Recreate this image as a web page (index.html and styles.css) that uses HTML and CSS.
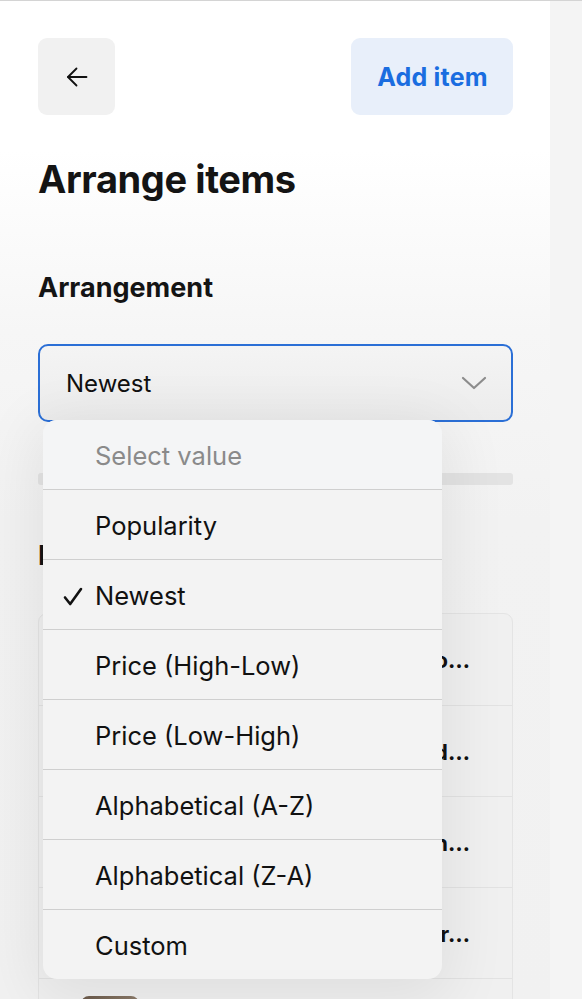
FILE: index.html
```html
<!DOCTYPE html>
<html lang="en">
<head>
<meta charset="utf-8">
<title>Arrange items</title>
<link rel="stylesheet" href="styles.css">
</head>
<body>
<div class="screen">
  <main class="panel">
    <header class="topbar">
      <button class="back-btn" aria-label="Back">
        <svg width="24" height="24" viewBox="0 0 24 24" fill="none" stroke="#111" stroke-width="1.8" stroke-linecap="round" stroke-linejoin="round"><path d="M21.5 12H3"/><path d="M11.5 3.5L3 12l8.5 8.5"/></svg>
      </button>
      <button class="add-btn">Add item</button>
    </header>

    <h1 class="title">Arrange items</h1>

    <h2 class="label">Arrangement</h2>

    <div class="select-wrap">
      <div class="select">
        <span class="select-value">Newest</span>
        <svg class="chevron" width="26" height="14" viewBox="0 0 26 14" fill="none" stroke="#8c8c8c" stroke-width="2.2" stroke-linecap="round" stroke-linejoin="round"><path d="M2 2l11 10L24 2"/></svg>
      </div>

      <ul class="menu">
        <li class="menu-row placeholder">Select value</li>
        <li class="menu-row">Popularity</li>
        <li class="menu-row checked"><svg class="check" width="20" height="19" viewBox="0 0 20 19" fill="none" stroke="#111" stroke-width="2.6" stroke-linecap="round" stroke-linejoin="round"><path d="M2 10.5l5.2 6.5L18 2"/></svg>Newest</li>
        <li class="menu-row">Price (High-Low)</li>
        <li class="menu-row">Price (Low-High)</li>
        <li class="menu-row">Alphabetical (A-Z)</li>
        <li class="menu-row">Alphabetical (Z-A)</li>
        <li class="menu-row">Custom</li>
      </ul>
    </div>

    <div class="bar"></div>

    <h2 class="label items-label">Items</h2>

    <div class="card">
      <div class="item"><div class="thumb"></div><span class="item-name">Stoneware bowl duo…</span></div>
      <div class="item"><div class="thumb"></div><span class="item-name">Cotton tote, braided…</span></div>
      <div class="item"><div class="thumb"></div><span class="item-name">Scented soy candle in…</span></div>
      <div class="item"><div class="thumb"></div><span class="item-name">Linen table runner for…</span></div>
      <div class="item"><div class="thumb"></div><span class="item-name">Woven rattan basket</span></div>
    </div>
  </main>
  <aside class="side"></aside>
</div>
</body>
</html>
```

FILE: styles.css
```css
* { box-sizing: border-box; }

html, body {
  margin: 0;
  padding: 0;
  height: 999px;
  overflow: hidden;
  font-family: Inter, "Noto Sans", "Liberation Sans", sans-serif;
  color: #111;
}

.screen {
  display: flex;
  height: 999px;
  overflow: hidden;
  border-top: 1px solid #d4d4d4;
}

.panel {
  width: 550px;
  flex: none;
  height: 100%;
  overflow: hidden;
  padding: 37px 37px 0 38px;
  background: linear-gradient(180deg, #ffffff 0px, #ffffff 150px, #f6f6f6 330px, #f2f2f2 520px, #f1f1f1 100%);
}

.side {
  flex: 1;
  background: #f4f4f4;
}

.topbar {
  display: flex;
  justify-content: space-between;
  align-items: center;
  height: 77px;
}

.back-btn {
  width: 77px;
  height: 77px;
  border: none;
  border-radius: 9px;
  background: #f1f1f1;
  display: flex;
  align-items: center;
  justify-content: center;
  padding: 0;
}

.add-btn {
  width: 162px;
  height: 77px;
  border: none;
  border-radius: 9px;
  background: #e8effa;
  color: #1a6de0;
  font-family: Inter, "Noto Sans", sans-serif;
  font-weight: 700;
  font-size: 25px;
  letter-spacing: 0.2px;
  padding: 0 0 0 1px;
}

.title {
  margin: 41px 0 0;
  font-size: 38px;
  line-height: 46px;
  font-weight: 700;
  letter-spacing: -0.4px;
  color: #141414;
}

.label {
  margin: 70px 0 0;
  font-size: 27px;
  line-height: 32px;
  font-weight: 700;
  letter-spacing: 0;
  color: #141414;
}

.select-wrap {
  position: relative;
  margin-top: 40px;
}

.select {
  height: 78px;
  border: 2px solid #2b6fd6;
  border-radius: 10px;
  background: linear-gradient(180deg, #f4f4f4, #ececec);
  display: flex;
  align-items: center;
  justify-content: space-between;
  padding: 0 24px 0 26px;
}

.select-value {
  font-size: 24px;
  color: #111;
}

.menu {
  position: absolute;
  left: 5px;
  top: 76px;
  width: 399px;
  margin: 0;
  padding: 0;
  list-style: none;
  background: #f3f3f3;
  border-radius: 14px;
  box-shadow: 0 12px 60px 10px rgba(0, 0, 0, 0.07);
  z-index: 5;
  overflow: hidden;
}

.menu-row {
  height: 70px;
  display: flex;
  align-items: center;
  padding-left: 52px;
  padding-top: 2px;
  font-size: 25.5px;
  color: #111;
  border-top: 1px solid #cfcfcf;
  position: relative;
}

.menu-row:first-child {
  border-top: none;
  height: 69px;
  background: #f4f5f6;
}

.placeholder {
  color: #8a8a8a;
}

.check {
  position: absolute;
  left: 20px;
  top: 27px;
}

.bar {
  margin-top: 51px;
  height: 12px;
  border-radius: 3px;
  background: #e3e3e3;
}

.items-label {
  margin-top: 55px;
}

.card {
  margin-top: 41px;
  border: 1px solid #e4e4e4;
  border-radius: 9px;
  background: #f0f0f0;
  overflow: hidden;
}

.item {
  height: 91px;
  display: flex;
  align-items: flex-start;
  gap: 26px;
  padding: 17px 42px 0 42px;
  border-top: 1px solid #e2e2e2;
}

.item:first-child {
  border-top: none;
}

.thumb {
  width: 58px;
  height: 58px;
  flex: none;
  border-radius: 8px;
  background: linear-gradient(135deg, #6b5a4a, #a89886);
}

.item-name {
  flex: 1;
  min-width: 0;
  white-space: nowrap;
  overflow: hidden;
  text-overflow: ellipsis;
  text-align: right;
  font-size: 22px;
  font-weight: 700;
  line-height: 58px;
  color: #111;
}
```
